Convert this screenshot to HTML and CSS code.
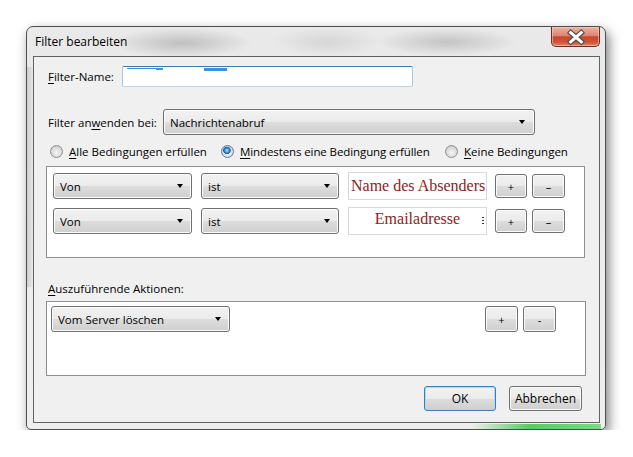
FILE: index.html
```html
<!DOCTYPE html>
<html lang="de">
<head>
    <meta charset="UTF-8">
    <title>Filter bearbeiten</title>
    <link rel="stylesheet" href="styles.css">
</head>
<body>
    <div class="window">
        <div class="titlebar">
            <span class="title">Filter bearbeiten</span>
            <button class="close">
                <svg width="49" height="20" viewBox="0 0 49 20">
                    <path d="M19.5 5.5 L30.5 15 M30.5 5.5 L19.5 15" stroke="#4a4a4a" stroke-width="5.5" stroke-linecap="square"/>
                    <path d="M19.5 5.5 L30.5 15 M30.5 5.5 L19.5 15" stroke="#ffffff" stroke-width="3.2" stroke-linecap="square"/>
                </svg>
            </button>
        </div>

        <div class="client">
            <div class="name-row">
                <label class="lbl name-lbl"><u>F</u>ilter-Name:</label>
                <div class="textfield">
                    <svg width="289" height="19" viewBox="0 0 289 19">
                        <rect x="4" y="1" width="30" height="1" fill="#3d8fe6"/>
                        <rect x="33" y="1" width="7" height="2" fill="#3d8fe6"/>
                        <rect x="81" y="1" width="23" height="3" fill="#3d8fe6"/>
                    </svg>
                </div>
            </div>

            <div class="apply-row">
                <label class="lbl apply-lbl">Filter an<u>w</u>enden bei:</label>
                <div class="combo apply-combo"><span>Nachrichtenabruf</span></div>
            </div>

            <div class="radios">
                <label class="radio r-all"><span class="dot"></span><span><u>A</u>lle Bedingungen erfüllen</span></label>
                <label class="radio r-any"><span class="dot checked"></span><span><u>M</u>indestens eine Bedingung erfüllen</span></label>
                <label class="radio r-none"><span class="dot"></span><span><u>K</u>eine Bedingungen</span></label>
            </div>

            <div class="listbox conditions">
                <div class="cond">
                    <div class="combo c-field"><span>Von</span></div>
                    <div class="combo c-op"><span>ist</span></div>
                    <div class="value">Name des Absenders</div>
                    <button class="btn small plus">+</button>
                    <button class="btn small minus">&ndash;</button>
                </div>
                <div class="cond">
                    <div class="combo c-field"><span>Von</span></div>
                    <div class="combo c-op"><span>ist</span></div>
                    <div class="value centered">Emailadresse<span class="grip"></span></div>
                    <button class="btn small plus">+</button>
                    <button class="btn small minus">&ndash;</button>
                </div>
            </div>

            <div class="section-lbl"><u>A</u>uszuführende Aktionen:</div>

            <div class="listbox actions">
                <div class="combo a-field"><span>Vom Server löschen</span></div>
                <button class="btn act plus">+</button>
                <button class="btn act minus">-</button>
            </div>

            <div class="footer">
                <button class="btn default">OK</button>
                <button class="btn cancel">Abbrechen</button>
            </div>
        </div>
    </div>
</body>
</html>
```

FILE: styles.css
```css
body {
    margin: 0;
    background-color: #ffffff;
    font-family: "Open Sans", "Noto Sans", sans-serif;
    font-size: 11.5px;
    color: #000;
}

u {
    text-decoration-thickness: 1px;
    text-underline-offset: 2px;
}

/* window frame (aero glass) */
.window {
    margin: 26px 0 0 26px;
    width: 580px;
    height: 404px;
    box-sizing: border-box;
    display: flex;
    flex-direction: column;
    padding: 0 5px 6px 6px;
    border: 1px solid #4e4e4e;
    border-radius: 7px 7px 5px 5px;
    background:
        linear-gradient(to right, rgba(95, 205, 105, 0), #5cc964 45%, #7ad884) no-repeat right 4px bottom 0 / 130px 5px,
        radial-gradient(closest-side, rgba(140, 140, 140, 0.45), rgba(140, 140, 140, 0)) no-repeat 85px 1px / 140px 30px,
        radial-gradient(closest-side, rgba(140, 140, 140, 0.4), rgba(140, 140, 140, 0)) no-repeat 350px 1px / 140px 28px,
        radial-gradient(closest-side, rgba(170, 170, 170, 0.3), rgba(170, 170, 170, 0)) no-repeat 245px 0 / 110px 30px,
        linear-gradient(to right, rgba(150, 150, 150, 0.35), rgba(150, 150, 150, 0)) no-repeat 0 40px / 7px 220px,
        linear-gradient(#e9e9e9, #eeeeee);
    box-shadow: 3px 5px 12px rgba(0, 0, 0, 0.5);
}

.titlebar {
    height: 29px;
    display: flex;
    align-items: flex-start;
}

.title {
    margin: 7px 0 0 2px;
    font-size: 12px;
    line-height: 16px;
}

.close {
    margin-left: auto;
    width: 49px;
    height: 20px;
    padding: 0;
    border: 1px solid #6b2b20;
    border-top: none;
    border-radius: 0 0 5px 5px;
    background: linear-gradient(#eab2a4, #de8571 45%, #c9472f 52%, #cf5438 80%, #e08469);
    box-shadow: inset 0 0 0 1px rgba(255, 220, 210, 0.5);
    display: flex;
}

/* client area */
.client {
    flex: 1;
    display: flex;
    flex-direction: column;
    align-items: flex-start;
    border: 1px solid #626262;
    background-color: #f0f0f0;
}

.lbl {
    flex: none;
}

.name-row {
    margin: 9px 0 0 14px;
    display: flex;
    align-items: center;
}

.name-lbl {
    width: 74px;
}

.textfield {
    width: 291px;
    height: 21px;
    box-sizing: border-box;
    border: 1px solid #a4c9e3;
    border-top-color: #3d7bad;
    border-bottom-color: #b5d3ea;
    border-radius: 2px;
    background-color: #fff;
}

.textfield svg {
    display: block;
}

.apply-row {
    margin: 22px 0 0 14px;
    display: flex;
    align-items: center;
}

.apply-lbl {
    width: 115px;
}

/* combobox, looks like a button */
.combo {
    box-sizing: border-box;
    display: flex;
    align-items: center;
    justify-content: space-between;
    padding: 0 8px 0 6px;
    border: 1px solid #707070;
    border-radius: 3px;
    background: linear-gradient(#f2f2f2, #ebebeb 50%, #dddddd 50%, #cfcfcf);
    box-shadow: inset 0 0 0 1px #fbfbfb;
    white-space: nowrap;
}

.combo::after {
    content: "";
    border-left: 3.5px solid transparent;
    border-right: 3.5px solid transparent;
    border-top: 4px solid #000;
}

.apply-combo {
    width: 372px;
    height: 26px;
    padding-right: 9px;
}

/* radio buttons */
.radios {
    margin-top: 8px;
    padding-left: 16px;
    height: 16px;
    display: flex;
    gap: 15px;
}

.radio {
    display: flex;
    align-items: center;
    gap: 6px;
    white-space: nowrap;
}

.r-all { width: 156px; }
.r-any { width: 209px; }
.r-none { width: 122px; }

.r-any span + span {
    letter-spacing: -0.1px;
}

.dot {
    flex: none;
    width: 13px;
    height: 13px;
    box-sizing: border-box;
    border: 1px solid #8e8f8f;
    border-radius: 50%;
    background: radial-gradient(circle at 50% 60%, #f4f4f4 0, #dadada 5px, #cfcfcf 6px);
}

.dot.checked {
    border-color: #5c7fa3;
    background:
        radial-gradient(circle at 45% 40%, #b9e7ff 0, #3c95df 2px, #1d5fa8 3.5px, rgba(255, 255, 255, 0) 4px),
        radial-gradient(circle at 50% 60%, #f4f4f4 0, #dadada 5px, #cfcfcf 6px);
}

/* list boxes */
.listbox {
    box-sizing: border-box;
    border: 1px solid #8f8f8f;
    background-color: #fff;
}

.conditions {
    margin: 7px 0 0 12px;
    width: 539px;
    height: 92px;
    padding: 5px 0 0 6px;
}

.cond {
    display: flex;
    align-items: center;
    height: 28px;
    margin-bottom: 7px;
}

.c-field {
    width: 139px;
    height: 26px;
}

.c-op {
    width: 138px;
    height: 26px;
    margin-left: 9px;
}

.value {
    width: 139px;
    height: 28px;
    box-sizing: border-box;
    margin-left: 9px;
    padding-left: 2px;
    display: flex;
    align-items: center;
    border: 1px solid #d6dade;
    background-color: #fff;
    font-family: "Liberation Serif", serif;
    font-size: 16px;
    color: #8b2323;
    white-space: nowrap;
    overflow: hidden;
}

.value.centered {
    justify-content: center;
    align-items: flex-start;
    padding: 2px 0 0;
    position: relative;
}

.grip {
    position: absolute;
    right: 2px;
    top: 9px;
    width: 2px;
    height: 7px;
    background: repeating-linear-gradient(#333 0 1px, transparent 1px 3px);
}

/* buttons */
.btn {
    box-sizing: border-box;
    padding: 0;
    border: 1px solid #707070;
    border-radius: 3px;
    background: linear-gradient(#f2f2f2, #ebebeb 50%, #dddddd 50%, #cfcfcf);
    box-shadow: inset 0 0 0 1px #fbfbfb;
    font-family: "Open Sans", "Noto Sans", sans-serif;
    font-size: 11.5px;
    color: #000;
}

.btn.small {
    height: 24px;
    font-size: 11px;
}

.cond .plus {
    width: 32px;
    margin-left: 8px;
}

.cond .minus {
    width: 33px;
    margin-left: 5px;
}

.section-lbl {
    margin: 23px 0 0 14px;
    line-height: 16px;
}

.actions {
    margin: 4px 0 0 12px;
    width: 540px;
    height: 75px;
    padding: 4px 29px 0 4px;
    display: flex;
    align-items: flex-start;
}

.a-field {
    width: 179px;
    height: 26px;
}

.btn.act {
    width: 33px;
    height: 26px;
    font-size: 11px;
}

.act.plus {
    margin-left: auto;
}

.act.minus {
    margin-left: 5px;
}

.footer {
    margin-top: 10px;
    align-self: stretch;
    display: flex;
    justify-content: flex-end;
    gap: 13px;
    padding-right: 17px;
}

.footer .btn {
    height: 25px;
    font-size: 12px;
}

.default {
    width: 72px;
    border-color: #3c7fb1;
    box-shadow: inset 0 0 0 1px #a3dcf6;
}

.cancel {
    width: 73px;
}
```
